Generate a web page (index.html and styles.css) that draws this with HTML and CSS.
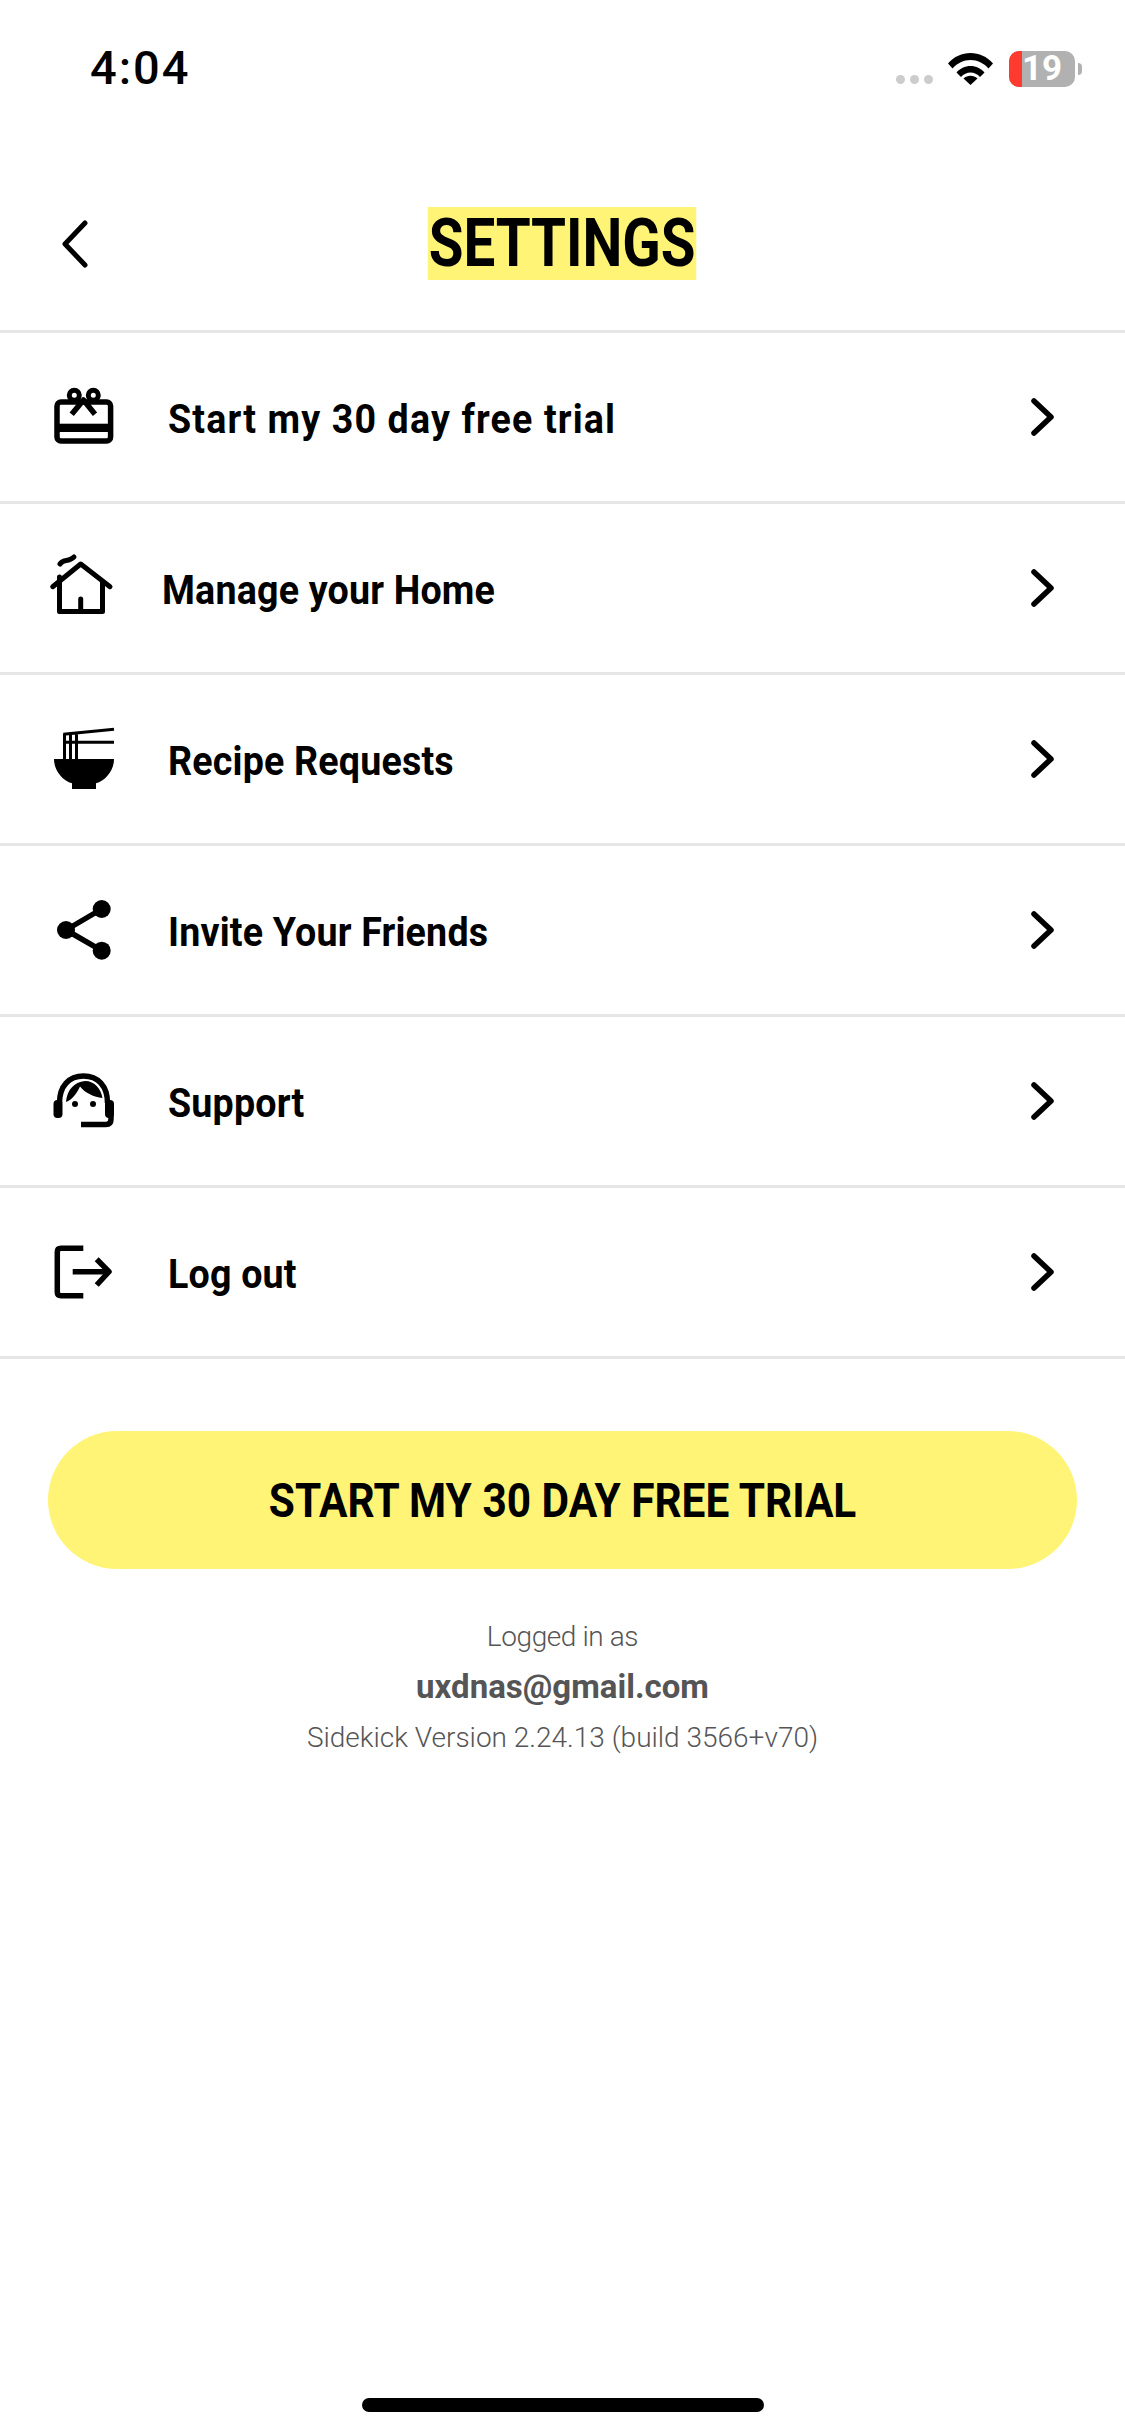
FILE: index.html
```html
<!DOCTYPE html>
<html lang="en">
<head>
    <meta charset="UTF-8">
    <title>Settings</title>
    <link rel="stylesheet" href="styles.css">
</head>
<body>
    <div class="status-bar">
        <span class="status-time">4:04</span>
        <div class="status-icons">
            <div class="signal-dots"><i></i><i></i><i></i></div>
            <svg class="wifi" viewBox="0 0 45 33"><path d="M0 11.500C6 4.500 14 1 22.500 1S39 4.500 45 11.500L40.500 16.500C35.500 11 29.500 8 22.500 8S9.500 11 4.500 16.500Z"/><path d="M8.500 20.500C12 16.500 17 14 22.500 14S33 16.500 36.500 20.500L32 25C29.500 22 26 20.500 22.500 20.500S15.500 22 13 25Z"/><path d="M15.500 26.500C17.500 24.700 20 23.800 22.500 23.800S27.500 24.700 29.500 26.500L22.500 33Z"/></svg>
            <div class="battery"><div class="battery-low"></div><span class="battery-num">19</span></div>
            <div class="battery-tip"></div>
        </div>
    </div>

    <header class="page-header">
        <a class="back-link" href="#">
            <svg class="back-icon" viewBox="0 0 27 48"><path d="M24 3L4 24L24 45"/></svg>
        </a>
        <h1 class="page-title"><span>SETTINGS</span></h1>
    </header>

    <ul class="menu">
        <li class="menu-row">
            <svg class="menu-icon" viewBox="0 0 72 72">
                <rect class="line" x="9" y="21" width="53.600" height="39" rx="4"/>
                <rect x="9" y="42.700" width="53.600" height="8.300"/>
                <circle class="line thin" cx="26.300" cy="14.300" r="5"/>
                <circle class="line thin" cx="45.300" cy="14.300" r="5"/>
                <path class="line" d="M23.700 33.300L35.500 19L47 33.300"/>
            </svg>
            <span class="menu-label menu-label-wide">Start my 30 day free trial</span>
            <svg class="chevron" viewBox="0 0 26 38"><path d="M4 3L21 19L4 35"/></svg>
        </li>
        <li class="menu-row menu-row-home">
            <svg class="menu-icon" viewBox="0 0 72 72">
                <path class="line round thin" d="M4.700 34.700L32.700 12L62 34.700"/>
                <path class="line round thin" d="M11.500 25V59.500H54.500V30"/>
                <path class="line round thin" d="M32.700 47V59"/>
                <path class="line round thin" d="M12 12C16 6 20 11 26 5"/>
            </svg>
            <span class="menu-label">Manage your Home</span>
            <svg class="chevron" viewBox="0 0 26 38"><path d="M4 3L21 19L4 35"/></svg>
        </li>
        <li class="menu-row">
            <svg class="menu-icon" viewBox="0 0 72 72">
                <path d="M6 36H66C66 48 57 58 48 60.300V66H24V60.300C15 58 6 48 6 36Z"/>
                <path class="line hair" d="M15.300 11.300L66 6.300M15.300 19.300H66M16.500 11V36M22.500 11V36M28.500 11V36"/>
            </svg>
            <span class="menu-label">Recipe Requests</span>
            <svg class="chevron" viewBox="0 0 26 38"><path d="M4 3L21 19L4 35"/></svg>
        </li>
        <li class="menu-row">
            <svg class="menu-icon" viewBox="0 0 72 72">
                <path class="line" d="M53.700 15L18 36L53.700 56.700"/>
                <circle cx="53.700" cy="15" r="9"/>
                <circle cx="18" cy="36" r="9"/>
                <circle cx="53.700" cy="56.700" r="9"/>
            </svg>
            <span class="menu-label">Invite Your Friends</span>
            <svg class="chevron" viewBox="0 0 26 38"><path d="M4 3L21 19L4 35"/></svg>
        </li>
        <li class="menu-row">
            <svg class="menu-icon" viewBox="0 0 72 72">
                <path class="line" d="M11.500 38C11.500 21 21 11 35.500 11C50 11 59.500 21 59.500 38"/>
                <rect x="5.500" y="35" width="9" height="18" rx="4"/>
                <rect x="57" y="35" width="9" height="18" rx="4"/>
                <path class="line" d="M63 48V54Q63 59.500 58 59.500H33"/>
                <path d="M18 37C19 25 26 17 37 16C47 16 53 24 54.500 33C46 32 37 28 32 21.500C29 28 24 35 18 37Z"/>
                <circle cx="27" cy="39" r="3"/>
                <circle cx="45" cy="39" r="3"/>
            </svg>
            <span class="menu-label">Support</span>
            <svg class="chevron" viewBox="0 0 26 38"><path d="M4 3L21 19L4 35"/></svg>
        </li>
        <li class="menu-row">
            <svg class="menu-icon" viewBox="0 0 72 72">
                <path class="line" d="M35.300 12.300H13Q9.300 12.300 9.300 16V56Q9.300 59.700 13 59.700H35.300"/>
                <path class="line" d="M24.700 35.700H60"/>
                <path class="line" d="M48.700 23.300L61 35.700L48.700 49"/>
            </svg>
            <span class="menu-label">Log out</span>
            <svg class="chevron" viewBox="0 0 26 38"><path d="M4 3L21 19L4 35"/></svg>
        </li>
    </ul>

    <div class="trial">
        <button class="trial-button"><span>START MY 30 DAY FREE TRIAL</span></button>
    </div>

    <div class="account-info">
        <p class="logged-as">Logged in as</p>
        <p class="account-email">uxdnas@gmail.com</p>
        <p class="app-version">Sidekick Version 2.24.13 (build 3566+v70)</p>
    </div>

    <div class="home-indicator"></div>
</body>
</html>
```
FILE: styles.css
```css
* {
    margin: 0;
    padding: 0;
    box-sizing: border-box;
}

body {
    width: 1125px;
    height: 2436px;
    background: #ffffff;
    color: #000000;
    font-family: Roboto, "Liberation Sans", sans-serif;
    display: flex;
    flex-direction: column;
    overflow: hidden;
}

/* status bar */
.status-bar {
    height: 100px;
    padding: 44px 43px 0 90px;
    display: flex;
    justify-content: space-between;
    align-items: flex-start;
}

.status-time {
    font-size: 47px;
    font-weight: 500;
    line-height: 48px;
    letter-spacing: 2px;
}

.status-icons {
    display: flex;
    align-items: flex-start;
    margin-top: 7px;
}

.signal-dots {
    display: flex;
    gap: 5px;
    margin-top: 24px;
    margin-right: 15px;
}

.signal-dots i {
    display: block;
    width: 9px;
    height: 9px;
    background: #cccccc;
    border-radius: 50%;
}

.wifi {
    width: 45px;
    height: 33px;
    margin-top: 1px;
    margin-right: 16px;
}

.battery {
    width: 66px;
    height: 36px;
    background: #b1b1b1;
    border-radius: 10px;
    position: relative;
    text-align: center;
    line-height: 36px;
}

.battery-low {
    position: absolute;
    top: 0;
    left: 0;
    width: 13px;
    height: 100%;
    background: #ff3b30;
    border-radius: 10px 0 0 10px;
}

.battery-num {
    position: relative;
    color: #ffffff;
    font-size: 35px;
    font-weight: 700;
}

.battery-tip {
    width: 4px;
    height: 12px;
    margin-top: 12px;
    margin-left: 3px;
    background: #b1b1b1;
    border-radius: 0 6px 6px 0;
}

/* header */
.page-header {
    display: grid;
    grid-template-columns: 1fr auto 1fr;
    align-items: center;
    padding: 107px 64px 50px;
}

.back-link {
    display: flex;
    margin-left: -3px;
}

.back-icon {
    width: 27px;
    height: 48px;
    fill: none;
    stroke: #000000;
    stroke-width: 5;
    stroke-linecap: round;
    stroke-linejoin: round;
}

.page-title {
    display: flex;
    font-size: 66px;
    font-weight: 700;
    line-height: 73px;
}

/* the app font is narrower than anything installed */
.page-title span {
    background: #fff476;
    padding: 0 1px;
    transform: scaleX(0.855);
}

/* menu */
.menu {
    list-style: none;
    border-top: 3px solid #e6e6e6;
}

.menu-row {
    height: 171px;
    padding: 0 69px 0 48px;
    border-bottom: 3px solid #e6e6e6;
    display: flex;
    align-items: center;
    gap: 48px;
}

.menu-row-home {
    gap: 42px;
}

.menu-icon {
    width: 72px;
    height: 72px;
    flex-shrink: 0;
}

.line {
    fill: none;
    stroke: #000000;
    stroke-width: 5.500;
    stroke-linejoin: round;
}

.line.thin {
    stroke-width: 5;
}

.line.hair {
    stroke-width: 3;
}

.line.round {
    stroke-linecap: round;
}

.menu-label {
    flex: 1;
    padding-top: 5px;
    font-size: 40px;
    font-weight: 700;
    line-height: 48px;
    letter-spacing: 0.2px;
    transform: scaleX(0.94);
    transform-origin: left center;
}

.menu-label-wide {
    letter-spacing: 1.2px;
}

.chevron {
    width: 26px;
    height: 38px;
    fill: none;
    stroke: #000000;
    stroke-width: 5.500;
    stroke-linecap: round;
    stroke-linejoin: round;
}

/* button */
.trial {
    padding: 72px 48px 0;
}

.trial-button {
    display: block;
    width: 100%;
    height: 138px;
    border: none;
    border-radius: 69px;
    background: #fff476;
    color: #000000;
    font-family: Roboto, sans-serif;
    font-size: 49px;
    font-weight: 700;
    cursor: pointer;
}

.trial-button span {
    display: inline-block;
    transform: scaleX(0.865);
}

/* account info */
.account-info {
    padding-top: 48px;
    text-align: center;
    color: #555555;
    font-size: 28px;
    font-weight: 300;
}

.logged-as {
    line-height: 40px;
    letter-spacing: -0.4px;
}

.account-email {
    margin-top: 10px;
    font-size: 33px;
    font-weight: 700;
    line-height: 40px;
}

.app-version {
    margin-top: 11px;
    line-height: 40px;
}

.home-indicator {
    width: 402px;
    height: 14px;
    margin: auto auto 24px;
    background: #000000;
    border-radius: 7px;
}
```
